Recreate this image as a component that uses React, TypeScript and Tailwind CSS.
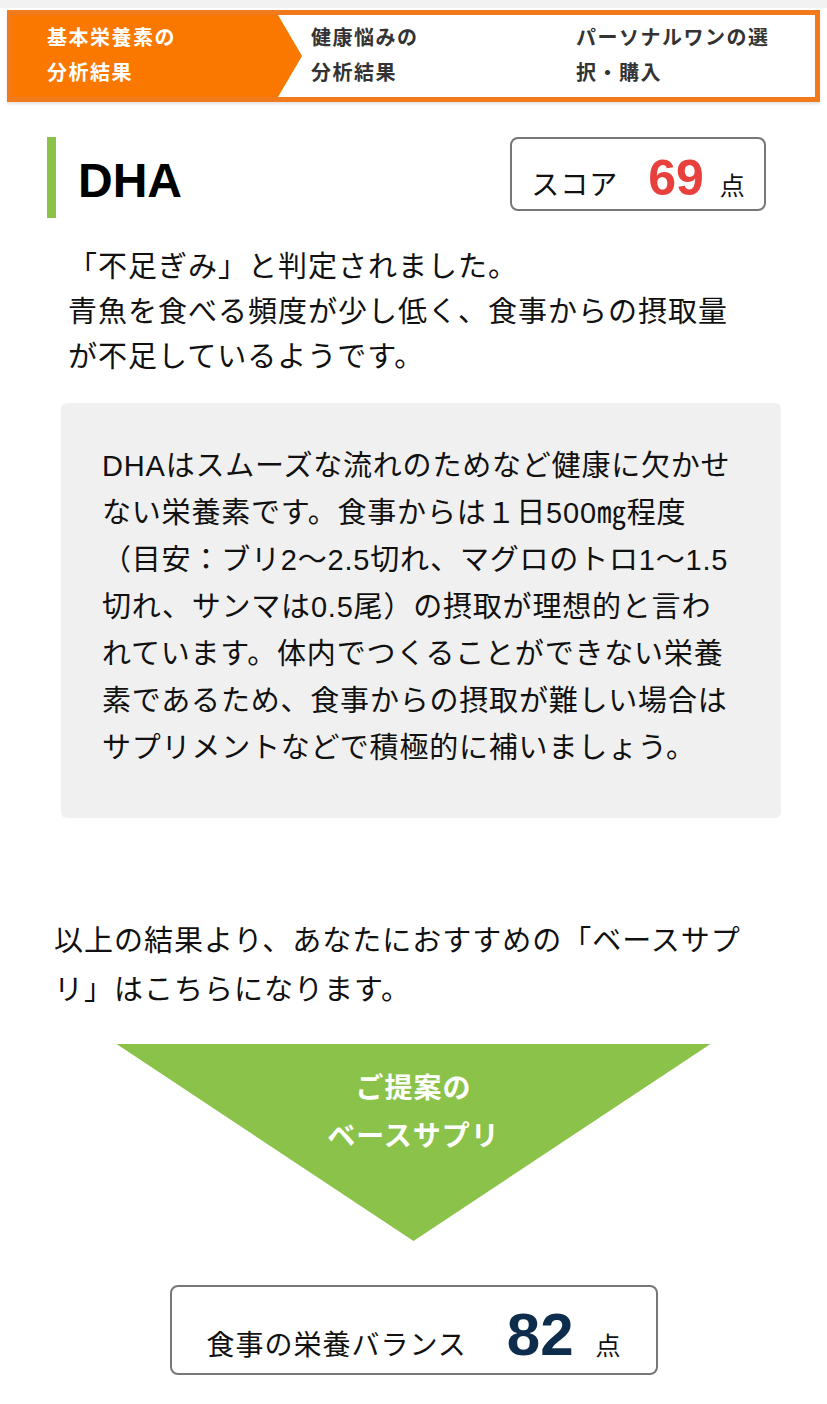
const jp = { fontFamily: '"Liberation Sans", "Noto Sans CJK JP", sans-serif' };

function StepBar() {
  return (
    <div className="bg-white">
      <div className="h-[8px] bg-[#f2f2f2]" />
      <div className="mx-[7px] mt-[2px] flex h-[92px] border-[5px] border-[#f07a1c] bg-white text-[20px] font-bold leading-[35px] tracking-[1.5px] shadow-[0_2px_3px_rgba(0,0,0,0.12)]">
        <div className="flex w-[290px] items-center bg-[#fb7800] pl-[35px] text-white [clip-path:polygon(0_0,266px_0,100%_50%,266px_100%,0_100%)]">
          <div>
            基本栄養素の
            <br />
            分析結果
          </div>
        </div>
        <div className="flex w-[265px] items-center pl-[9px] text-[#333]">
          <div>
            健康悩みの
            <br />
            分析結果
          </div>
        </div>
        <div className="flex flex-1 items-center pl-[9px] text-[#333]">
          <div className="whitespace-nowrap">
            パーソナルワンの選
            <br />
            択・購入
          </div>
        </div>
      </div>
    </div>
  );
}

function ScoreHead() {
  return (
    <div className="mt-[35px] flex items-start justify-between pl-[47px] pr-[61px]">
      <div className="flex h-[81px] items-center border-l-[9px] border-[#8bc34a] pl-[22px] pt-[6px] text-[48px] font-bold text-black">
        DHA
      </div>
      <div className="flex h-[74px] w-[256px] items-baseline justify-center gap-[4px] rounded-[8px] border-2 border-[#777] pt-[14px]">
        <span className="text-[28px] tracking-[1px] text-[#111]">スコア</span>
        <span className="ml-[26px] text-[50px] font-bold leading-none text-[#e8403c]">69</span>
        <span className="ml-[12px] text-[25px] text-[#111]">点</span>
      </div>
    </div>
  );
}

export default function App() {
  return (
    <div className="min-h-[1404px] bg-white" style={jp}>
      <StepBar />
      <ScoreHead />

      <p className="mt-[27px] whitespace-nowrap pl-[68px] text-[29px] leading-[45px] tracking-[1px] text-[#111]">
        「不足ぎみ」と判定されました。
        <br />
        青魚を食べる頻度が少し低く、食事からの摂取量
        <br />
        が不足しているようです。
      </p>

      <div className="ml-[61px] mr-[46px] mt-[23px] rounded-[6px] bg-[#f0f0f0] pb-[46px] pl-[41px] pt-[40px]">
        <p className="whitespace-nowrap text-[29px] leading-[47px] tracking-[0.8px] text-[#111]">
          DHAはスムーズな流れのためなど健康に欠かせ
          <br />
          ない栄養素です。食事からは１日500㎎程度
          <br />
          （目安：ブリ2〜2.5切れ、マグロのトロ1〜1.5
          <br />
          切れ、サンマは0.5尾）の摂取が理想的と言わ
          <br />
          れています。体内でつくることができない栄養
          <br />
          素であるため、食事からの摂取が難しい場合は
          <br />
          サプリメントなどで積極的に補いましょう。
        </p>
      </div>

      <p className="mt-[99px] whitespace-nowrap pl-[54px] text-[29px] leading-[49px] tracking-[1px] text-[#111]">
        以上の結果より、あなたにおすすめの「ベースサプ
        <br />
        リ」はこちらになります。
      </p>

      <div className="mx-auto mt-[29px] h-[197px] w-[594px] bg-[#8bc34a] pt-[21px] text-center text-[28px] font-bold leading-[48px] tracking-[1px] text-white [clip-path:polygon(0_0,100%_0,50%_100%)]">
        ご提案の
        <br />
        ベースサプリ
      </div>

      <div className="mx-auto mt-[44px] flex h-[90px] w-[488px] items-baseline justify-center rounded-[8px] border-2 border-[#777] pt-[18px]">
        <span className="text-[28px] tracking-[1px] text-[#111]">食事の栄養バランス</span>
        <span className="ml-[40px] text-[60px] font-bold leading-none text-[#0e2c4b]">82</span>
        <span className="ml-[22px] text-[25px] text-[#111]">点</span>
      </div>
    </div>
  );
}
